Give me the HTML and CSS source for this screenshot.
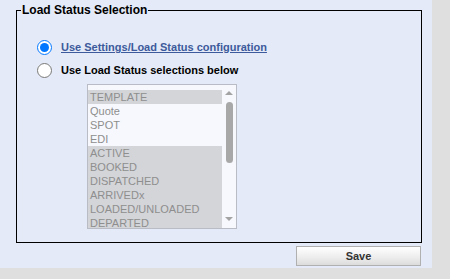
FILE: index.html
```html
<!DOCTYPE html>
<html lang="en">
<head>
  <meta charset="UTF-8">
  <title>Load Status Selection</title>
  <link rel="stylesheet" href="styles.css">
</head>
<body>
  <div class="panel">
    <fieldset class="group">
      <legend>Load Status Selection</legend>
      <div class="choice first">
        <input type="radio" name="mode" id="modeSettings" checked>
        <label for="modeSettings" class="link">Use Settings/Load Status configuration</label>
      </div>
      <div class="choice">
        <input type="radio" name="mode" id="modeList">
        <label for="modeList">Use Load Status selections below</label>
      </div>
      <div class="listbox">
        <div class="items">
          <div class="item sel">TEMPLATE</div>
          <div class="item">Quote</div>
          <div class="item">SPOT</div>
          <div class="item">EDI</div>
          <div class="item sel">ACTIVE</div>
          <div class="item sel">BOOKED</div>
          <div class="item sel">DISPATCHED</div>
          <div class="item sel">ARRIVEDx</div>
          <div class="item sel">LOADED/UNLOADED</div>
          <div class="item sel">DEPARTED</div>
        </div>
        <div class="scrollbar">
          <div class="arrow up"></div>
          <div class="thumb"></div>
          <div class="arrow down"></div>
        </div>
      </div>
    </fieldset>
    <div class="actions">
      <button class="btn">Save</button>
    </div>
  </div>
</body>
</html>
```

FILE: styles.css
```css
body {
  margin: 0;
  background: #dfdfdf;
  font-family: "Liberation Sans", Arial, sans-serif;
  font-size: 11px;
}

.panel {
  width: 432px;
  height: 268px;
  box-sizing: border-box;
  background: #e4eaf7;
  padding: 3px 0 0 16px;
}

.group {
  width: 406px;
  height: 240px;
  box-sizing: border-box;
  margin: 0;
  padding: 0;
  border: 1px solid #000;
}

.group legend {
  font-size: 12px;
  font-weight: bold;
  color: #000;
  padding: 0 1px;
  margin-left: 4px;
  line-height: 14px;
}

.choice {
  display: flex;
  align-items: center;
  height: 16px;
  margin: 7px 0 0 20px;
  font-weight: bold;
  color: #000;
}

.choice.first {
  margin-top: 22px;
}

.choice input {
  width: 15px;
  height: 15px;
  margin: 0 9px 0 0;
}

.link {
  color: #3d5a9c;
  text-decoration: underline;
}

.listbox {
  display: flex;
  width: 150px;
  height: 145px;
  box-sizing: border-box;
  margin: 6px 0 0 70px;
  border: 1px solid #b9bcc4;
  background: #f6f8fd;
}

.items {
  flex: 1;
  padding-top: 5px;
  overflow: hidden;
}

.item {
  height: 14px;
  line-height: 14px;
  padding-left: 2px;
  color: #8e8e8e;
  white-space: nowrap;
}

.item.sel {
  background: #d4d5d9;
}

.scrollbar {
  width: 14px;
  display: flex;
  flex-direction: column;
  align-items: center;
  background: #f6f8fd;
}

.arrow {
  width: 0;
  height: 0;
  border-left: 4px solid transparent;
  border-right: 4px solid transparent;
}

.arrow.up {
  margin-top: 6px;
  border-bottom: 4px solid #a3a3a3;
}

.arrow.down {
  margin-top: auto;
  margin-bottom: 7px;
  border-top: 4px solid #a3a3a3;
}

.thumb {
  width: 7px;
  height: 61px;
  margin-top: 7px;
  border-radius: 4px;
  background: #a8a8a8;
}

.actions {
  display: flex;
  justify-content: flex-end;
  padding: 3px 11px 0 0;
}

.btn {
  width: 125px;
  height: 20px;
  box-sizing: border-box;
  border: 1px solid #b0b0b0;
  background: linear-gradient(#ffffff, #ececec 60%, #dcdcdc);
  font-family: "Liberation Sans", Arial, sans-serif;
  font-size: 11px;
  font-weight: bold;
  color: #333;
  padding: 0;
}
```
